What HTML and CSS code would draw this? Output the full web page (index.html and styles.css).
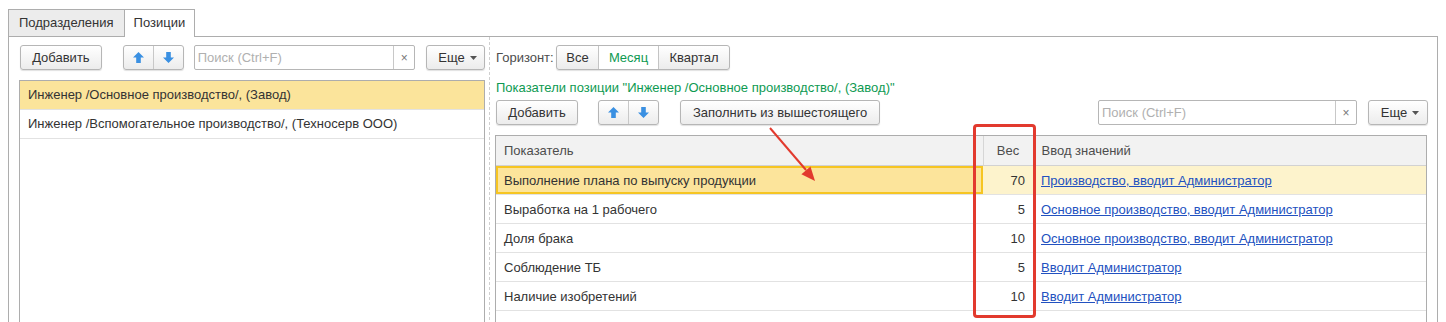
FILE: index.html
```html
<!DOCTYPE html>
<html lang="ru">
<head>
    <meta charset="UTF-8">
    <title>Позиции</title>
    <link rel="stylesheet" href="styles.css">
</head>
<body>

    <!-- Вкладки -->
    <div class="tabs">
        <div class="tab">Подразделения</div>
        <div class="tab active">Позиции</div>
    </div>

    <div class="panel">
        <!-- Левая часть: список позиций -->
        <div class="left">
            <div class="toolbar">
                <button class="btn btn-add">Добавить</button>
                <div class="arrows arrows-left">
                    <span class="arr"><svg width="13" height="13" viewBox="0 0 13 13"><path d="M6.5 1 L12 6.5 H8.8 V12 H4.2 V6.5 H1 Z" fill="#3a90e2"/></svg></span>
                    <span class="arr"><svg width="13" height="13" viewBox="0 0 13 13"><path d="M6.5 12 L12 6.5 H8.8 V1 H4.2 V6.5 H1 Z" fill="#3a90e2"/></svg></span>
                </div>
                <div class="search search-left">
                    <span class="placeholder">Поиск (Ctrl+F)</span>
                    <span class="clear">×</span>
                </div>
                <button class="btn btn-more">Еще <svg width="7" height="4" viewBox="0 0 7 4"><path d="M0 0 H7 L3.5 4 Z" fill="#555"/></svg></button>
            </div>
            <div class="list">
                <div class="list-row selected">Инженер /Основное производство/, (Завод)</div>
                <div class="list-row">Инженер /Вспомогательное производство/, (Техносерв ООО)</div>
            </div>
        </div>

        <div class="splitter"></div>

        <!-- Правая часть: показатели -->
        <div class="right">
            <div class="horizon">
                <span class="horizon-label">Горизонт:</span>
                <div class="segment">
                    <span class="seg seg-all">Все</span>
                    <span class="seg seg-month active">Месяц</span>
                    <span class="seg seg-quarter">Квартал</span>
                </div>
            </div>

            <div class="title">Показатели позиции "Инженер /Основное производство/, (Завод)"</div>

            <div class="toolbar toolbar-right">
                <button class="btn btn-add">Добавить</button>
                <div class="arrows arrows-right">
                    <span class="arr"><svg width="13" height="13" viewBox="0 0 13 13"><path d="M6.5 1 L12 6.5 H8.8 V12 H4.2 V6.5 H1 Z" fill="#3a90e2"/></svg></span>
                    <span class="arr"><svg width="13" height="13" viewBox="0 0 13 13"><path d="M6.5 12 L12 6.5 H8.8 V1 H4.2 V6.5 H1 Z" fill="#3a90e2"/></svg></span>
                </div>
                <button class="btn btn-fill">Заполнить из вышестоящего</button>
                <div class="spacer"></div>
                <div class="search search-right">
                    <span class="placeholder">Поиск (Ctrl+F)</span>
                    <span class="clear">×</span>
                </div>
                <button class="btn btn-more btn-more-right">Еще <svg width="7" height="4" viewBox="0 0 7 4"><path d="M0 0 H7 L3.5 4 Z" fill="#555"/></svg></button>
            </div>

            <div class="grid">
                <table>
                    <colgroup>
                        <col class="c-name">
                        <col class="c-weight">
                        <col>
                    </colgroup>
                    <thead>
                        <tr>
                            <th>Показатель</th>
                            <th class="col-weight">Вес</th>
                            <th class="col-input">Ввод значений</th>
                        </tr>
                    </thead>
                    <tbody>
                        <tr class="current">
                            <td class="focus">Выполнение плана по выпуску продукции</td>
                            <td class="col-weight">70</td>
                            <td class="col-input"><a href="#">Производство, вводит Администратор</a></td>
                        </tr>
                        <tr>
                            <td>Выработка на 1 рабочего</td>
                            <td class="col-weight">5</td>
                            <td class="col-input"><a href="#">Основное производство, вводит Администратор</a></td>
                        </tr>
                        <tr>
                            <td>Доля брака</td>
                            <td class="col-weight">10</td>
                            <td class="col-input"><a href="#">Основное производство, вводит Администратор</a></td>
                        </tr>
                        <tr>
                            <td>Соблюдение ТБ</td>
                            <td class="col-weight">5</td>
                            <td class="col-input"><a href="#">Вводит Администратор</a></td>
                        </tr>
                        <tr>
                            <td>Наличие изобретений</td>
                            <td class="col-weight">10</td>
                            <td class="col-input"><a href="#">Вводит Администратор</a></td>
                        </tr>
                    </tbody>
                </table>
            </div>
        </div>
    </div>

    <!-- Пометки поверх скриншота -->
    <div class="mark-box"></div>
    <svg class="mark-arrow" width="1446" height="322" viewBox="0 0 1446 322">
        <line x1="770" y1="128" x2="806" y2="170" stroke="#e23a2e" stroke-width="2"/>
        <polygon points="815,181 801.4,174.2 810.5,166.5" fill="#e23a2e"/>
    </svg>

</body>
</html>
```

FILE: styles.css
```css
html, body {
    margin: 0;
    height: 322px;
    overflow: hidden;
}

body {
    font-family: "Liberation Sans", Arial, sans-serif;
    font-size: 13px;
    color: #333;
    background-color: #fff;
    position: relative;
}

/* Вкладки */
.tabs {
    display: flex;
    padding: 9px 0 0 8px;
}

.tab {
    height: 26px;
    line-height: 26px;
    padding: 0 10px;
    border: 1px solid #adadad;
    border-bottom: none;
    background-color: #ececec;
    color: #333;
}

.tab + .tab {
    border-left: none;
    padding: 0 9px;
}

.tab.active {
    background-color: #fff;
    height: 27px;
    margin-bottom: -1px;
    position: relative;
}

.panel {
    margin-left: 8px;
    width: 1430px;
    height: 300px;
    box-sizing: border-box;
    border: 1px solid #adadad;
    display: flex;
    padding: 0 9px 0 10px;
}

/* Кнопки */
.btn {
    height: 25px;
    box-sizing: border-box;
    padding: 0;
    border: 1px solid #b6b6b6;
    border-radius: 3px;
    background: linear-gradient(#ffffff, #ececec);
    box-shadow: 0 1px 1px rgba(0, 0, 0, 0.12);
    font-family: inherit;
    font-size: 13px;
    color: #333;
    text-align: center;
}

.btn-add {
    width: 82px;
    margin-left: 1px;
}

.btn-more {
    width: 59px;
    margin-left: 11px;
    display: flex;
    align-items: center;
    justify-content: center;
    gap: 5px;
    padding-left: 4px;
}

.btn-more-right {
    width: 60px;
}

.btn-fill {
    width: 200px;
    margin-left: 21px;
}

.toolbar {
    display: flex;
    align-items: center;
    height: 25px;
}

.arrows {
    display: flex;
    height: 25px;
    box-sizing: border-box;
    border: 1px solid #b6b6b6;
    border-radius: 3px;
    background: linear-gradient(#ffffff, #ececec);
    box-shadow: 0 1px 1px rgba(0, 0, 0, 0.12);
    margin-left: 21px;
}

.arrows-right {
    margin-left: 20px;
}

.arr {
    width: 29px;
    display: flex;
    align-items: center;
    justify-content: center;
}

.arr + .arr {
    border-left: 1px solid #c8c8c8;
}

.search {
    height: 25px;
    box-sizing: border-box;
    border: 1px solid #b6b6b6;
    border-radius: 2px;
    display: flex;
    align-items: center;
    background-color: #fff;
}

.search-left {
    width: 222px;
    margin-left: 10px;
}

.search-right {
    width: 259px;
}

.placeholder {
    flex: 1;
    padding-left: 3px;
    color: #b0b0b0;
}

.clear {
    width: 20px;
    height: 100%;
    border-left: 1px solid #c8c8c8;
    display: flex;
    align-items: center;
    justify-content: center;
    color: #777;
    font-size: 12px;
}

/* Левая часть */
.left {
    width: 466px;
    padding-top: 8px;
    display: flex;
    flex-direction: column;
}

.list {
    margin-top: 10px;
    flex: 1;
    border: 1px solid #adadad;
    border-bottom: none;
}

.list-row {
    height: 28px;
    line-height: 28px;
    padding-left: 8px;
    border-bottom: 1px solid #e2e2e2;
}

.list-row.selected {
    background-color: #fbe49b;
}

.splitter {
    width: 5px;
    margin-left: 4px;
    border-left: 1px dashed #cfcfcf;
}

/* Правая часть */
.right {
    width: 933px;
    padding-top: 8px;
    display: flex;
    flex-direction: column;
}

.horizon {
    display: flex;
    align-items: center;
    height: 25px;
}

.horizon-label {
    width: 60px;
    margin-left: 1px;
    color: #4d4d4d;
}

.segment {
    display: flex;
    height: 25px;
    box-sizing: border-box;
    border: 1px solid #b6b6b6;
    border-radius: 3px;
    background: linear-gradient(#ffffff, #ececec);
    box-shadow: 0 1px 1px rgba(0, 0, 0, 0.12);
}

.seg {
    display: flex;
    align-items: center;
    justify-content: center;
}

.seg + .seg {
    border-left: 1px solid #c4c4c4;
}

.seg-all {
    width: 41px;
}

.seg-month {
    width: 59px;
}

.seg-quarter {
    width: 70px;
}

.seg.active {
    background: #fff;
    color: #0e9a52;
}

.title {
    margin-top: 10px;
    height: 16px;
    line-height: 16px;
    margin-left: 1px;
    color: #0e9a52;
}

.toolbar-right {
    margin-top: 4px;
}

.spacer {
    flex: 1;
}

/* Таблица */
.grid {
    margin-top: 10px;
    flex: 1;
    width: 932px;
    box-sizing: border-box;
    border: 1px solid #adadad;
    border-bottom: none;
}

table {
    width: 100%;
    border-collapse: collapse;
    table-layout: fixed;
}

.c-name {
    width: 487px;
}

.c-weight {
    width: 50px;
}

th {
    height: 29px;
    background-color: #f2f2f2;
    border-bottom: 1px solid #d2d2d2;
    font-weight: normal;
    text-align: left;
    color: #4d4d4d;
    padding: 0 0 0 8px;
}

th + th {
    border-left: 1px solid #d6d6d6;
}

td {
    height: 28px;
    border-bottom: 1px solid #e2e2e2;
    padding: 0 0 0 8px;
    white-space: nowrap;
}

.col-weight {
    text-align: right;
    padding-right: 8px;
    padding-left: 0;
}

th.col-weight {
    text-align: center;
    padding: 0;
}

.col-input {
    padding-left: 8px;
}

tr.current td {
    background-color: #fdf3cc;
}

tr.current td.focus {
    background-color: #fce49b;
    box-shadow: inset 0 0 0 2px #f6c522;
}

a {
    color: #2251c0;
    text-decoration: underline;
}

/* Пометки */
.mark-box {
    position: absolute;
    left: 973px;
    top: 124px;
    width: 63px;
    height: 194px;
    box-sizing: border-box;
    border: 3px solid #e23a2e;
    border-radius: 4px;
}

.mark-arrow {
    position: absolute;
    left: 0;
    top: 0;
    pointer-events: none;
}
```
